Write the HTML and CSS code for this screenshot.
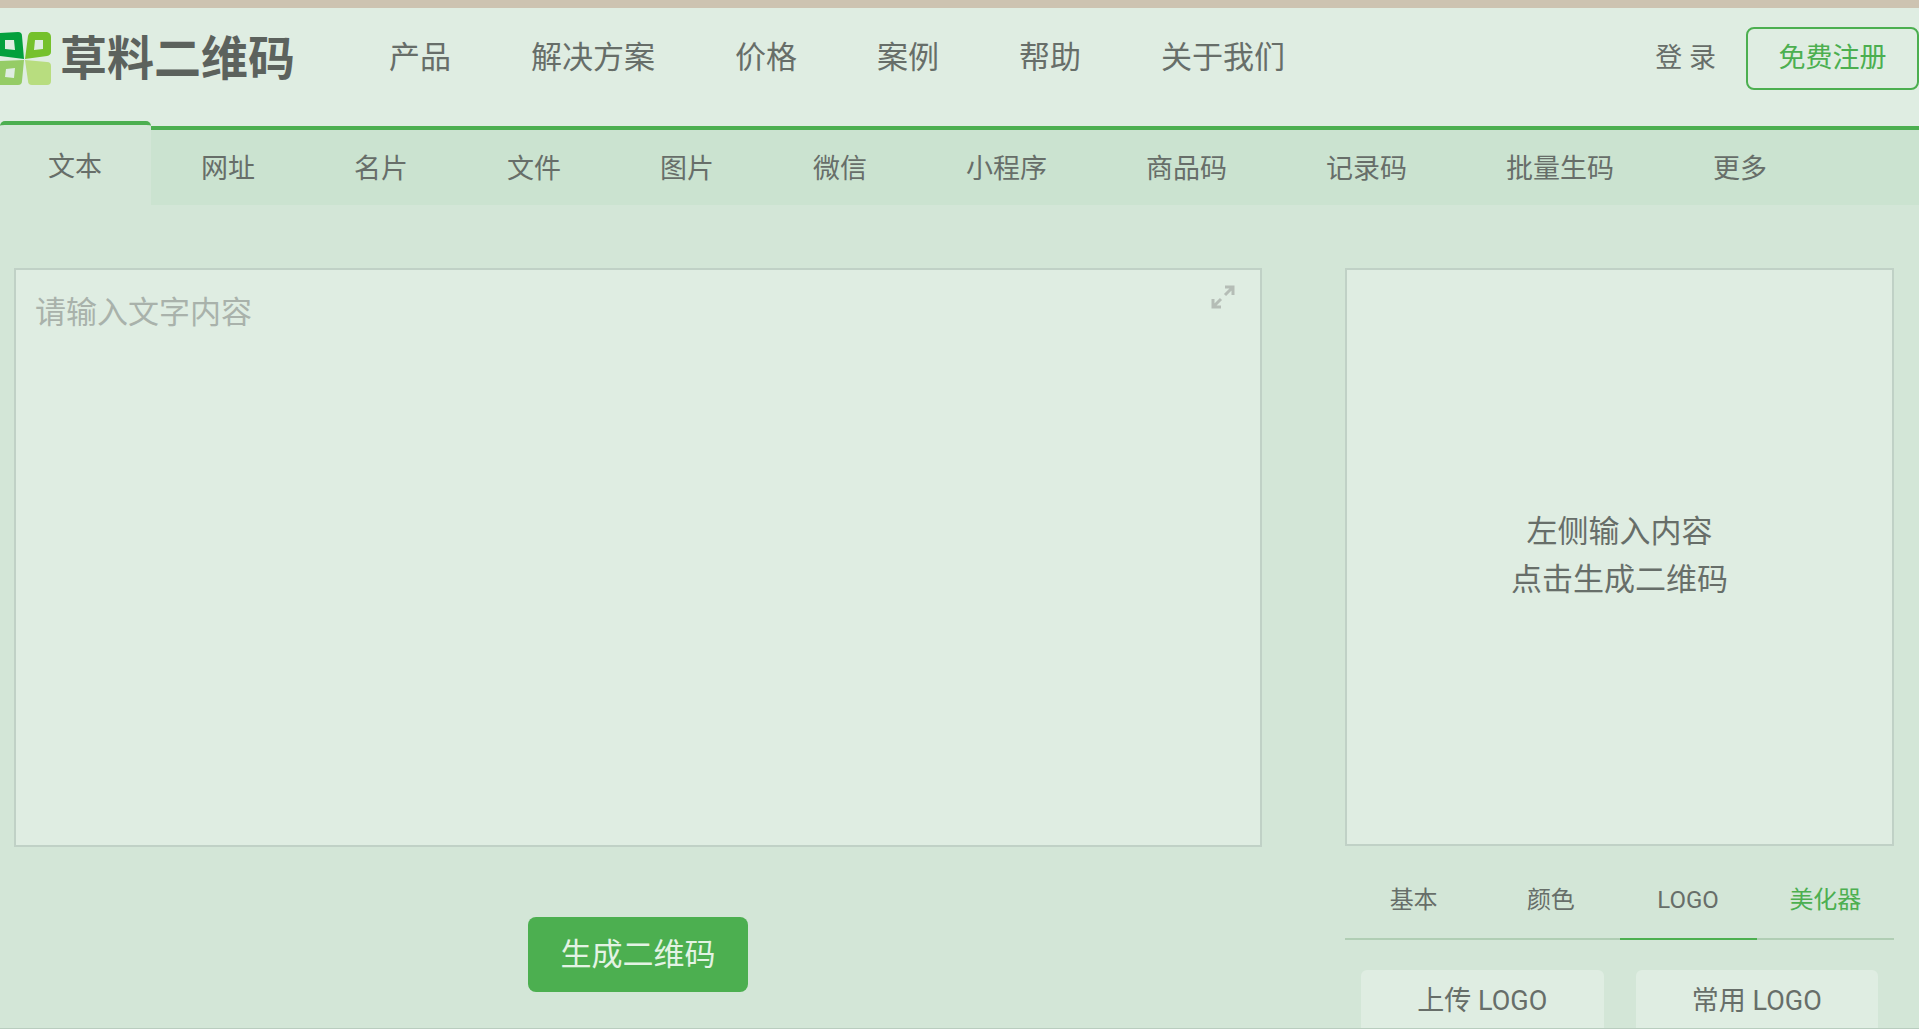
FILE: index.html
```html
<!DOCTYPE html>
<html lang="zh-CN">
<head>
    <meta charset="UTF-8">
    <meta name="viewport" content="width=device-width, initial-scale=1.0">
    <title>草料二维码</title>
    <link rel="stylesheet" href="styles.css">
</head>
<body>
    <header class="header">
        <a class="logo" href="#">
            <svg class="logo-mark" width="52" height="54" viewBox="0 0 52 54" aria-hidden="true">
                <path fill="#03a03d" fill-rule="evenodd" d="M0 1 L18 0 Q22 0 22 4 L24 27 L0 24 Z M5 8 L14 8 L15 18 L5 17 Z"/>
                <path fill="#75c12c" fill-rule="evenodd" d="M32 0 L47 0 Q51 1 51 5 L51 20 Q51 23 47 24 L25 27 L28 4 Q29 0 32 0 Z M35 8 L43 8 L43 17 L34 18 Z"/>
                <path fill="#95cc66" fill-rule="evenodd" d="M0 29 L24 28 L22 49 Q22 53 18 53 L0 53 Z M6 37 L15 36 L14 46 L5 45 Z"/>
                <path fill="#b8dd7f" d="M25 28 L47 30 Q51 30 51 34 L51 49 Q51 53 47 53 L32 53 Q28 53 28 49 Z"/>
            </svg>
            <span>草料二维码</span>
        </a>
        <nav class="nav">
            <a href="#">产品</a>
            <a href="#">解决方案</a>
            <a href="#">价格</a>
            <a href="#">案例</a>
            <a href="#">帮助</a>
            <a href="#">关于我们</a>
        </nav>
        <div class="account">
            <a href="#">登 录</a>
            <button class="register" type="button">免费注册</button>
        </div>
    </header>

    <nav class="tabs">
        <a class="active" href="#">文本</a>
        <a href="#">网址</a>
        <a href="#">名片</a>
        <a href="#">文件</a>
        <a href="#">图片</a>
        <a href="#">微信</a>
        <a href="#">小程序</a>
        <a href="#">商品码</a>
        <a href="#">记录码</a>
        <a href="#">批量生码</a>
        <a href="#">更多</a>
    </nav>

    <main class="main">
        <section class="editor">
            <div class="editor-box">
                <textarea id="content" aria-label="文字内容" placeholder="请输入文字内容"></textarea>
                <button class="expand" type="button" aria-label="全屏">
                    <svg width="24" height="24" viewBox="0 0 24 24" fill="none" stroke="#b5bdb6" stroke-width="3">
                        <path d="M14 2 H22 V10 M22 2 L14 10"/>
                        <path d="M2 14 V22 H10 M2 22 L10 14"/>
                    </svg>
                </button>
            </div>
            <button class="generate" type="button">生成二维码</button>
        </section>

        <aside class="side">
            <div class="preview">
                <p>左侧输入内容</p>
                <p>点击生成二维码</p>
            </div>
            <div class="style-tabs">
                <button type="button">基本</button>
                <button type="button">颜色</button>
                <button class="active" type="button">LOGO</button>
                <button class="beautify" type="button">美化器</button>
            </div>
            <div class="logo-actions">
                <button type="button">上传 LOGO</button>
                <button type="button">常用 LOGO</button>
            </div>
        </aside>
    </main>
</body>
</html>
```
FILE: styles.css
```css
* {
    box-sizing: border-box;
}

body {
    margin: 0;
    height: 100vh;
    overflow: hidden;
    display: flex;
    flex-direction: column;
    font-family: Roboto, "Noto Sans CJK SC", sans-serif;
    font-size: 27px;
    color: #676e69;
    background-color: #d3e6d7;
    border-top: 8px solid #cdc3b1;
    border-bottom: 1px solid #b9cdbf;
}

a {
    color: inherit;
    text-decoration: none;
}

button {
    font-family: inherit;
    font-size: 27px;
    color: inherit;
    padding: 0;
    border: none;
    background: none;
    cursor: pointer;
}

/* 顶部导航 */
.header {
    flex-shrink: 0;
    display: flex;
    align-items: center;
    height: 118px;
    padding-bottom: 17px;
    background-color: #dfede2;
    white-space: nowrap;
}

.logo {
    display: flex;
    align-items: center;
    gap: 8px;
    font-size: 47px;
    font-weight: bold;
    line-height: 54px;
    color: #5c625d;
}

.logo-mark {
    display: block;
}

.nav {
    display: flex;
    gap: 80px;
    margin-left: 94px;
    padding-bottom: 8px;
    font-size: 31px;
}

.account {
    display: flex;
    align-items: center;
    gap: 30px;
    margin-left: auto;
}

.account a {
    padding-bottom: 6px;
}

.register {
    width: 173px;
    height: 63px;
    padding-bottom: 6px;
    color: #4caf50;
    border: 2px solid #4caf50;
    border-radius: 8px;
}

/* 类型标签 */
.tabs {
    flex-shrink: 0;
    display: flex;
    height: 79px;
    background-color: #cbe3d0;
    border-top: 4px solid #4caf50;
    white-space: nowrap;
}

.tabs a {
    padding: 0 49px 0 50px;
    line-height: 78px;
}

.tabs .active {
    margin-top: -9px;
    padding: 0 49px 0 48px;
    line-height: 84px;
    background-color: #d3e6d7;
    border-top: 4px solid #4caf50;
    border-radius: 5px 5px 0 0;
}

.main {
    display: grid;
    grid-template-columns: minmax(0, 1fr) 549px;
    gap: 83px;
    padding: 63px 25px 0 14px;
}

.editor {
    text-align: center;
}

.editor-box {
    position: relative;
}

textarea {
    display: block;
    width: 100%;
    height: 579px;
    padding: 19px 80px 18px 19px;
    font-family: inherit;
    font-size: 31px;
    line-height: 48px;
    color: #676e69;
    background-color: #dfede2;
    border: 2px solid #c0d1c6;
    border-radius: 0;
    outline: none;
    resize: none;
}

textarea::placeholder {
    color: #a9b2ab;
}

.expand {
    position: absolute;
    top: 17px;
    right: 27px;
}

.expand svg {
    display: block;
}

.generate {
    width: 220px;
    height: 75px;
    margin-top: 70px;
    padding-bottom: 6px;
    font-size: 31px;
    color: #e3f3e4;
    background-color: #4caf50;
    border-radius: 8px;
}

/* 右侧预览 */
.preview {
    display: flex;
    flex-direction: column;
    align-items: center;
    justify-content: center;
    height: 578px;
    padding-bottom: 2px;
    font-size: 31px;
    line-height: 48px;
    background-color: #dfede2;
    border: 2px solid #c0d1c6;
}

.preview p {
    margin: 0;
}

.style-tabs {
    display: grid;
    grid-template-columns: repeat(4, 1fr);
    margin-top: 16px;
}

.style-tabs button {
    height: 78px;
    font-size: 24px;
    line-height: 76px;
    border-bottom: 2px solid #b0ceb4;
}

.style-tabs .active {
    border-color: #4caf50;
}

.style-tabs .beautify {
    color: #4caf50;
}

.logo-actions {
    display: grid;
    grid-template-columns: 1fr 1fr;
    gap: 32px;
    padding: 30px 16px 0;
}

.logo-actions button {
    height: 60px;
    padding-bottom: 4px;
    background-color: #dfede2;
    border-radius: 6px 6px 0 0;
}
```
